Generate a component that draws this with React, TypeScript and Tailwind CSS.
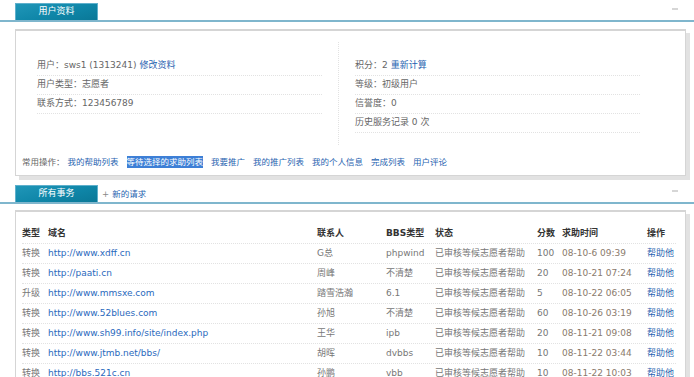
const font = "font-['DejaVu_Sans','Noto_Sans_CJK_SC',sans-serif]";

const rows = [
  { type: "转换", url: "http://www.xdff.cn", contact: "G总", bbs: "phpwind", score: "100", time: "08-10-6 09:39" },
  { type: "转换", url: "http://paati.cn", contact: "周峰", bbs: "不清楚", score: "20", time: "08-10-21 07:24" },
  { type: "升级", url: "http://www.mmsxe.com", contact: "踏雪浩瀚", bbs: "6.1", score: "5", time: "08-10-22 06:05" },
  { type: "转换", url: "http://www.52blues.com", contact: "孙旭", bbs: "不清楚", score: "60", time: "08-10-26 03:19" },
  { type: "转换", url: "http://www.sh99.info/site/index.php", contact: "王华", bbs: "ipb", score: "20", time: "08-11-21 09:08" },
  { type: "转换", url: "http://www.jtmb.net/bbs/", contact: "胡晖", bbs: "dvbbs", score: "10", time: "08-11-22 03:44" },
  { type: "转换", url: "http://bbs.521c.cn", contact: "孙鹏", bbs: "vbb", score: "10", time: "08-11-22 10:03" },
];

const cols = "grid grid-cols-[26px_269px_69px_49px_102px_25px_85px_1fr]";

function TabHeader({ title, extra }: { title: string; extra?: React.ReactNode }) {
  return (
    <div className="flex items-end h-[18px] border-b-2 border-[#7fb6cd]">
      <div className="ml-[15px] w-[83px] h-[17px] flex items-center justify-center text-white text-[9px] border border-b-0 border-[#5fb0cc] bg-[linear-gradient(165deg,#2096b8_0%,#0f86a8_55%,#0a7897_100%)]">
        {title}
      </div>
      {extra}
      <div className="ml-auto mr-[16px] self-start mt-[4px] w-[6px] h-[2px] bg-[#d6d6d6]" />
    </div>
  );
}

function Row({ children }: { children: React.ReactNode }) {
  return (
    <div className="h-[19px] flex items-center border-b border-dotted border-[#e2e2e2]">
      {children}
    </div>
  );
}

export default function App() {
  const links = ["我的帮助列表", "等待选择的求助列表", "我要推广", "我的推广列表", "我的个人信息", "完成列表", "用户评论"];
  return (
    <div className={`w-[694px] h-[377px] overflow-hidden bg-white pt-[4px] text-[9px] text-[#666] ${font}`}>
      <TabHeader title="用户资料" />

      <div className="mt-[7px] ml-[15px] w-[671px] border border-t-2 border-[#d5d5d5] bg-white shadow-[4px_4px_0_#e2e2e2] pt-[11px] pb-[7px]">
        <div className="flex h-[103px]">
          <div className="ml-[21px] w-[285px] pt-[15px]">
            <Row>
              <span>用户：sws1 (1313241) </span>
              <span className="ml-[3px] text-[#1f63b0]">修改资料</span>
            </Row>
            <Row><span>用户类型：志愿者</span></Row>
            <Row><span>联系方式：123456789</span></Row>
          </div>
          <div className="ml-[16px] pl-[16px] border-l border-dotted border-[#e2e2e2]">
            <div className="w-[285px] pt-[15px]">
              <Row>
                <span>积分：2 </span>
                <span className="ml-[3px] text-[#1f63b0]">重新计算</span>
              </Row>
              <Row><span>等级：初级用户</span></Row>
              <Row><span>信誉度：0</span></Row>
              <Row><span>历史服务记录 0 次</span></Row>
            </div>
          </div>
        </div>
        <div className="mt-[11px] pl-[6px] h-[12px] flex items-center gap-[8px] text-[8.5px]">
          <span className="mr-[-5px]">常用操作：</span>
          {links.map((l, i) => (
            <span
              key={l}
              className={i === 1 ? "bg-[#3d7fd6] text-white leading-[12px]" : "text-[#1f63b0]"}
            >
              {l}
            </span>
          ))}
        </div>
      </div>

      <div className="mt-[10px]">
        <TabHeader
          title="所有事务"
          extra={
            <div className="ml-[4px] self-center mt-[1px] flex items-center gap-[3px] text-[8.5px]">
              <span className="text-[#888]">+</span>
              <span className="text-[#1f63b0]">新的请求</span>
            </div>
          }
        />
      </div>

      <div className="mt-[6px] ml-[15px] w-[671px] h-[200px] border border-t-2 border-[#d5d5d5] bg-white shadow-[4px_4px_0_#e2e2e2] pt-[12px] pl-[6px] pr-[9px]">
        <div className={`${cols} h-[20px] items-center border-b border-dotted border-[#e2e2e2] font-bold text-[#333]`}>
          <span>类型</span>
          <span>域名</span>
          <span>联系人</span>
          <span>BBS类型</span>
          <span>状态</span>
          <span>分数</span>
          <span>求助时间</span>
          <span>操作</span>
        </div>
        {rows.map((r, i) => (
          <div key={i} className={`${cols} h-[20px] items-center border-b border-dotted border-[#e2e2e2] text-[#777]`}>
            <span>{r.type}</span>
            <span className="text-[#2a69bd]">{r.url}</span>
            <span>{r.contact}</span>
            <span>{r.bbs}</span>
            <span>已审核等候志愿者帮助</span>
            <span>{r.score}</span>
            <span className="text-[#8a7a6c]">{r.time}</span>
            <span className="text-[#1f63b0]">帮助他</span>
          </div>
        ))}
      </div>
    </div>
  );
}
